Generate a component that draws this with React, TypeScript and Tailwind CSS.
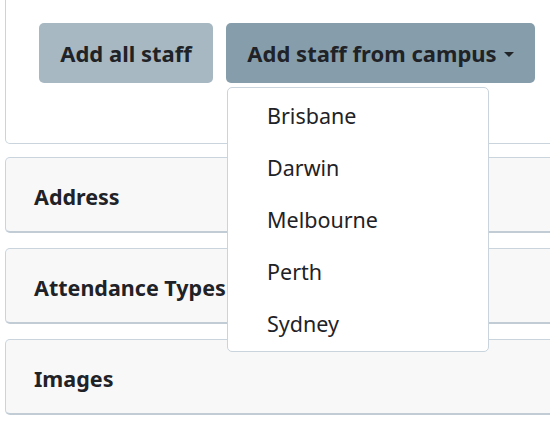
const campuses = ["Brisbane", "Darwin", "Melbourne", "Perth", "Sydney"];

const sections = ["Address", "Attendance Types", "Images"];

export default function App() {
  return (
    <div
      className="w-[550px] h-[433px] overflow-hidden bg-white pl-[5px] text-[#1f2226]"
      style={{ fontFamily: '"Noto Sans", "Open Sans", sans-serif' }}
    >
      <div className="w-[560px]">
        <div className="h-[144px] border border-t-0 border-[#c9d4dc] rounded-b-[5px] pl-[33px] pt-[23px]">
          <div className="flex gap-[13px]">
            <button
              type="button"
              className="h-[60px] w-[174px] rounded-[5px] bg-[#a7b8c2] text-[22px] font-bold"
            >
              Add all staff
            </button>
            <div className="relative">
              <button
                type="button"
                className="h-[60px] w-[309px] rounded-[5px] bg-[#869eab] text-[22px] font-bold flex items-center justify-center gap-[7px]"
              >
                Add staff from campus
                <span className="inline-block w-0 h-0 border-x-[5px] border-x-transparent border-t-[5px] border-t-[#212529] mt-[2px]" />
              </button>
              <ul className="absolute left-[1px] top-[64px] z-10 w-[262px] rounded-[5px] border border-[#c9d4dc] bg-white pt-[2px] pb-[1px]">
                {campuses.map((c) => (
                  <li key={c} className="h-[52px] flex items-center pl-[39px] text-[21.5px]">
                    {c}
                  </li>
                ))}
              </ul>
            </div>
          </div>
        </div>

        <div className="mt-[13px] flex flex-col gap-[15px]">
          {sections.map((s) => (
            <div
              key={s}
              className="h-[76px] border border-b-2 border-[#c9d4dc] border-b-[#c2ccd4] rounded-[5px] bg-[#f8f8f9] flex items-center pl-[28px] pt-[5px] text-[21.5px] font-bold"
            >
              {s}
            </div>
          ))}
        </div>
      </div>
    </div>
  );
}
